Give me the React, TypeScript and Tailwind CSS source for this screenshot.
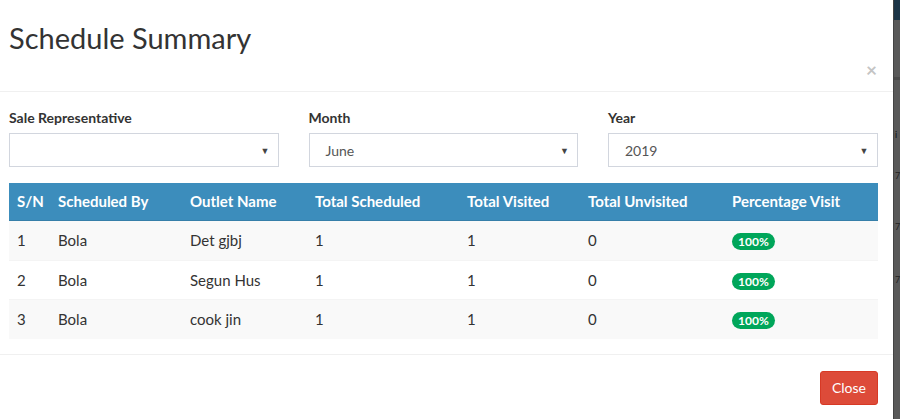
type Row = {
  sn: number;
  by: string;
  outlet: string;
  scheduled: number;
  visited: number;
  unvisited: number;
  pct: string;
};

const rows: Row[] = [
  { sn: 1, by: "Bola", outlet: "Det gjbj", scheduled: 1, visited: 1, unvisited: 0, pct: "100%" },
  { sn: 2, by: "Bola", outlet: "Segun Hus", scheduled: 1, visited: 1, unvisited: 0, pct: "100%" },
  { sn: 3, by: "Bola", outlet: "cook jin", scheduled: 1, visited: 1, unvisited: 0, pct: "100%" },
];

const cols = ["w-[41px]", "w-[132px]", "w-[125px]", "w-[152px]", "w-[121px]", "w-[144px]", "w-[154px]"];
const headers = ["S/N", "Scheduled By", "Outlet Name", "Total Scheduled", "Total Visited", "Total Unvisited", "Percentage Visit"];

function SelectBox({ label, value }: { label: string; value: string }) {
  return (
    <div className="flex w-[269.5px] flex-col">
      <label className="mb-[5px] text-[14px] font-bold leading-[20px] text-[#333]">{label}</label>
      <div className="flex h-[34px] items-center justify-between border border-[#d2d6de] pl-[16px] pr-[8px] text-[14px] text-[#555]">
        <span>{value}</span>
        <span className="text-[9px] leading-none text-[#444]">▼</span>
      </div>
    </div>
  );
}

export default function App() {
  return (
    <div className="flex h-[419px] w-[900px] flex-col overflow-hidden bg-[#595959] font-['Lato',sans-serif]">
      <div className="flex flex-1">
        {/* Modal */}
        <div className="flex w-[893px] flex-col bg-white pt-[2px]">
          <div className="relative h-[90px] border-b border-[#f0f0f0] pl-[9px] pr-[15px]">
            <h4 className="pt-[18px] text-[29px] leading-[36px] text-[#333]">Schedule Summary</h4>
            <div className="absolute right-[16px] top-[58px] text-[19px] font-bold leading-none text-[#c4c4c4]">×</div>
          </div>

          <div className="pl-[9px] pr-[15px] pt-[16px]">
            <div className="flex gap-[30px]">
              <SelectBox label="Sale Representative" value="" />
              <SelectBox label="Month" value="June" />
              <SelectBox label="Year" value="2019" />
            </div>

            <table className="mt-[16px] w-[869px] table-fixed border-collapse text-[15px] text-[#333]">
              <thead>
                <tr className="bg-[#3c8dbc] text-white">
                  {headers.map((h, i) => (
                    <th
                      key={h}
                      className={`${cols[i]} border-b border-[#367fa9] px-[8px] py-[9px] text-left font-bold leading-[19px]`}
                    >
                      {h}
                    </th>
                  ))}
                </tr>
              </thead>
              <tbody>
                {rows.map((r, idx) => (
                  <tr key={r.sn} className={idx % 2 === 0 ? "bg-[#f9f9f9]" : "bg-white"}>
                    <td className="border-t border-[#f4f4f4] px-[8px] py-[9px] align-top leading-[20.5px]">{r.sn}</td>
                    <td className="border-t border-[#f4f4f4] px-[8px] py-[9px] align-top leading-[20.5px]">{r.by}</td>
                    <td className="border-t border-[#f4f4f4] px-[8px] py-[9px] align-top leading-[20.5px]">{r.outlet}</td>
                    <td className="border-t border-[#f4f4f4] px-[8px] py-[9px] align-top leading-[20.5px]">{r.scheduled}</td>
                    <td className="border-t border-[#f4f4f4] px-[8px] py-[9px] align-top leading-[20.5px]">{r.visited}</td>
                    <td className="border-t border-[#f4f4f4] px-[8px] py-[9px] align-top leading-[20.5px]">{r.unvisited}</td>
                    <td className="border-t border-[#f4f4f4] px-[8px] py-[9px] align-top leading-[20.5px]">
                      <span className="inline-block rounded-full bg-[#00a65a] px-[6px] text-[12px] font-bold leading-[17px] text-white">
                        {r.pct}
                      </span>
                    </td>
                  </tr>
                ))}
              </tbody>
            </table>
          </div>

          <div className="mt-[15px] flex justify-end border-t border-[#f0f0f0] pl-[9px] pr-[15px] pt-[16px]">
            <button className="h-[34px] rounded-[3px] border border-[#d73925] bg-[#dd4b39] px-[11px] text-[14px] text-white">
              Close
            </button>
          </div>
        </div>

        {/* Backdrop strip */}
        <div className="flex flex-1 flex-col border-l border-[#444] pl-[1px]">
          <div className="-ml-[1px] h-[20px] bg-[#1c3547]" />
          <div className="-ml-[1px] mt-[57px] h-[3px] bg-[#4a4a4a]" />
          <div className="mt-[50px] text-[9px] leading-none text-[#111]">i</div>
          <div className="mt-[32px] text-[9px] leading-none text-[#222]">7</div>
          <div className="mt-[42px] text-[9px] leading-none text-[#222]">7</div>
          <div className="mt-[44px] text-[9px] leading-none text-[#222]">7</div>
        </div>
      </div>
    </div>
  );
}
